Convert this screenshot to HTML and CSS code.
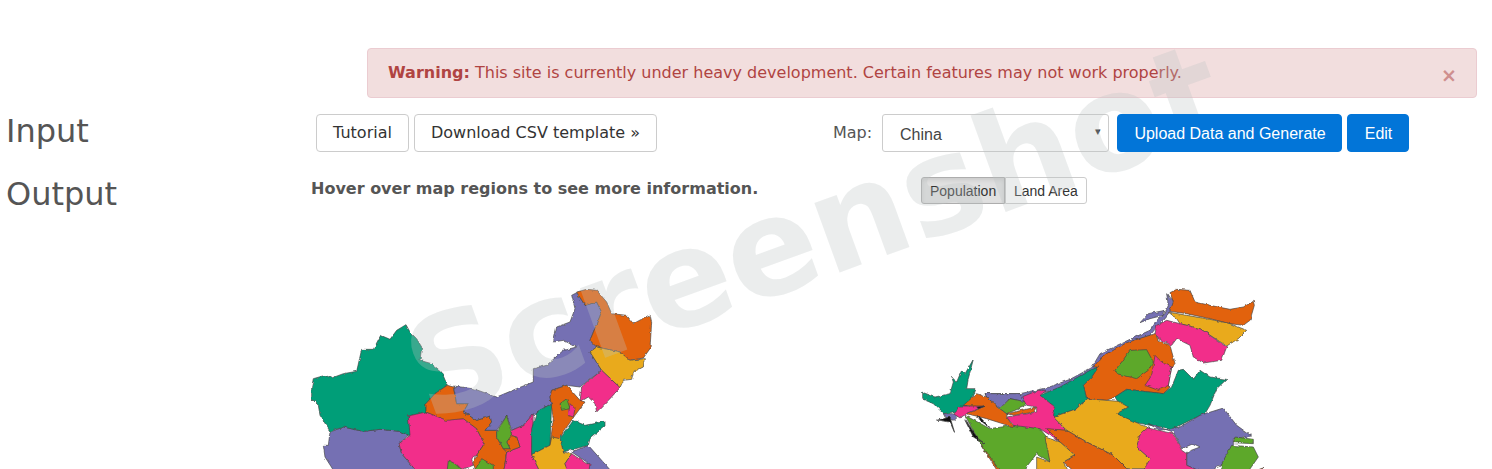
FILE: index.html
```html
<!DOCTYPE html>
<html lang="en">
<head>
<meta charset="utf-8">
<title>Map Generator</title>
<link rel="stylesheet" href="styles.css">
</head>
<body>
<div class="page">
  <div class="alert"><p class="alert-text"><strong>Warning:</strong> This site is currently under heavy development. Certain features may not work properly.</p><span class="alert-close">×</span></div>
  <section class="row row-input">
    <h2 class="heading">Input</h2>
    <div class="actions">
      <button class="btn btn-light btn-tutorial">Tutorial</button>
      <button class="btn btn-light btn-download">Download CSV template »</button>
    </div>
    <label class="map-label">Map:</label>
    <div class="select"><span>China</span><i class="caret">▾</i></div>
    <button class="btn btn-primary btn-upload">Upload Data and Generate</button>
    <button class="btn btn-primary btn-edit">Edit</button>
  </section>
  <section class="row row-output">
    <h2 class="heading">Output</h2>
    <p class="hint">Hover over map regions to see more information.</p>
    <div class="toggle"><span class="toggle-item active">Population</span><span class="toggle-item">Land Area</span></div>
  </section>
  <section class="maps">
    <svg class="map map-left" viewBox="0 0 1080 597" width="360" height="199">
      <defs>
        <filter id="rough" x="-2%" y="-2%" width="104%" height="104%">
          <feTurbulence type="fractalNoise" baseFrequency="0.07" numOctaves="2" seed="4" result="n"/>
          <feDisplacementMap in="SourceGraphic" in2="n" scale="9" xChannelSelector="R" yChannelSelector="G"/>
        </filter>
      </defs>
      <g class="regions" filter="url(#rough)">
        <path class="purple" d="M90 480 130 465 190 478 240 472 300 478 325 490 297 515 305 545 360 610 110 610 75 555 70 520 85 520Z"/>
        <path class="green" d="M35 345 40 320 75 310 95 318 130 305 170 298 185 232 220 232 242 190 270 202 290 175 318 158 330 180 350 200 365 225 360 265 395 275 425 300 442 340 405 365 378 395 378 420 325 432 335 490 325 490 300 478 240 472 190 478 130 465 90 478 60 430 55 400 35 380Z"/>
        <path class="pink" d="M325 432 378 420 440 440 490 440 530 470 553 515 530 550 515 560 520 580 440 610 360 610 305 545 297 515 330 490Z"/>
        <path class="orange" d="M378 395 405 365 442 340 460 345 470 395 505 395 490 420 530 445 570 432 575 450 555 475 590 475 590 495 610 530 620 540 610 610 530 610 520 575 530 550 553 515 530 470 490 440 440 445 378 420Z"/>
        <path class="purple" d="M460 342 520 350 590 375 650 350 700 330 700 290 740 280 790 235 830 225 790 205 760 210 770 165 810 150 825 110 815 70 830 62 855 100 890 90 905 120 870 205 890 225 870 240 905 295 840 345 800 340 755 355 750 375 755 395 710 420 700 430 670 460 635 475 620 432 590 475 555 475 575 450 570 432 530 445 490 420 505 395 470 395Z"/>
        <path class="orange" d="M830 60 860 52 890 55 920 90 935 125 980 130 1000 155 1050 128 1055 150 1050 230 1030 258 990 265 960 240 890 225 870 205 905 120 890 90 855 100Z"/>
        <path class="yellow" d="M870 240 890 225 960 240 990 265 1033 260 1030 285 1000 300 995 322 970 325 960 347 905 295Z"/>
        <path class="pink" d="M905 295 960 347 930 380 890 420 885 395 865 375 840 390 845 345Z"/>
        <path class="pink" d="M635 475 670 460 700 425 695 548 725 610 610 610 620 540 660 525 650 495 630 490Z"/>
        <path class="orange" d="M630 490 650 495 660 525 620 540 610 530 630 530 620 510Z"/>
        <path class="orange" d="M755 355 800 340 840 385 855 390 825 430 790 480 780 500 750 520 760 440 750 375Z"/>
        <path class="lime" d="M780 395 800 380 810 410 785 415Z"/>
        <path class="pink" d="M810 395 825 410 820 435 805 430Z"/>
        <path class="green" d="M755 395 750 520 695 548 695 470 710 420Z"/>
        <path class="lime" d="M590 480 620 432 630 465 635 490 620 510 630 530 610 530 590 495Z"/>
        <path class="purple" d="M815 540 865 520 945 610 870 610 860 570Z"/>
        <path class="green" d="M780 500 820 445 855 460 915 448 915 462 870 500 865 520 790 540Z"/>
        <path class="yellow" d="M695 548 750 520 755 495 780 500 790 540 815 545 795 575 805 610 725 610Z"/>
        <path class="pink" d="M815 545 860 575 870 575 865 610 805 610 795 575Z"/>
        <path class="lime" d="M445 565 465 575 500 610 440 610Z"/>
        <path class="lime" d="M515 610 545 560 580 580 580 610Z"/>
      </g>
    </svg>
    <svg class="map map-right" viewBox="0 0 1080 567" width="360" height="189">
      <g class="regions" filter="url(#rough)">
        <path class="purple" d="M770 35 780 50 825 50 785 75 775 95 745 130 720 160 650 185 600 215 575 245 555 265 500 300 430 325 340 345 290 355 230 345 225 335 290 335 330 335 410 318 480 292 545 257 570 215 600 200 660 172 720 145 745 110 765 95 775 70Z"/>
        <path class="purple" d="M690 122 715 95 765 85 760 100 720 110Z"/>
        <path class="purple" d="M225 335 330 335 350 360 300 350 270 378 260 372 230 345Z"/>
        <path class="orange" d="M780 32 800 22 840 25 855 60 900 70 960 82 1000 75 1030 58 1033 70 1020 115 1000 130 960 125 900 110 830 95 780 88 790 60Z"/>
        <path class="yellow" d="M775 90 830 100 900 112 960 125 1010 145 985 170 950 192 870 140 810 125 800 110Z"/>
        <path class="pink" d="M735 155 740 130 770 115 810 125 870 140 950 195 935 235 880 243 850 225 840 190 800 170 785 190 745 170Z"/>
        <path class="orange" d="M735 155 745 175 780 190 795 245 785 255 775 310 780 315 760 335 650 322 615 345 590 355 530 350 520 310 545 285 565 255 550 255 575 225 650 182Z"/>
        <path class="lime" d="M660 205 710 203 730 240 715 265 680 290 620 275 615 265 635 240Z"/>
        <path class="pink" d="M735 220 755 240 785 255 775 310 745 325 705 310 725 280 730 250Z"/>
        <path class="green" d="M390 340 450 315 540 265 565 255 545 285 520 310 530 350 500 380 430 405 435 375Z"/>
        <path class="green" d="M615 345 650 322 760 335 785 315 805 265 820 262 850 292 870 265 900 285 950 292 920 320 900 370 885 395 850 410 790 440 720 430 670 420 620 395 655 375 630 370Z"/>
        <path class="green" d="M35 330 75 345 120 335 130 300 125 285 140 300 155 265 165 275 190 232 175 290 170 320 195 320 185 350 160 385 100 395 70 365 35 350Z"/>
        <path class="purple" d="M100 395 150 395 130 415 105 405Z"/>
        <path class="orange" d="M165 410 262 567 285 567 205 475Z"/>
        <path class="lime" d="M165 400 240 440 310 430 390 440 410 465 420 540 380 515 340 567 270 567 205 475Z"/>
        <path class="orange" d="M160 370 200 335 230 345 260 372 270 380 290 395 290 405 310 435 230 410 170 395 220 375Z"/>
        <path class="pink" d="M130 395 150 372 225 372 170 395 150 408Z"/>
        <path class="lime" d="M270 380 300 350 350 360 340 375 290 395Z"/>
        <path class="orange" d="M290 395 380 375 370 390 310 400Z"/>
        <path class="pink" d="M335 345 385 325 410 325 390 340 435 375 430 405 470 445 440 445 450 480 390 440 310 430 290 405 380 390 380 375 350 370Z"/>
        <path class="yellow" d="M430 405 500 380 530 350 625 358 655 375 620 395 720 440 735 465 695 455 680 495 720 530 720 560 650 560 610 520 530 480 470 445Z"/>
        <path class="orange" d="M410 440 470 445 530 480 610 520 650 560 700 575 500 575 460 540 495 520 450 480Z"/>
        <path class="yellow" d="M405 465 450 480 495 520 460 540 480 575 380 575 380 525 420 540Z"/>
        <path class="purple" d="M715 425 750 445 810 435 870 400 940 378 980 430 1025 462 970 470 970 490 935 550 880 575 830 550 830 510 870 495 850 485 815 500 790 450Z"/>
        <path class="pink" d="M710 437 790 455 815 505 830 515 830 550 890 575 695 575 720 530 680 495 690 455Z"/>
        <path class="lime" d="M975 465 1030 472 1030 485 970 482Z"/>
        <path class="lime" d="M965 490 1030 495 1045 525 1010 575 935 575 935 545Z"/>
        <path class="ink" d="M80 415 120 405 135 455 120 420 90 415ZM165 415 205 470 225 485 190 465ZM200 375 225 372 205 380ZM205 400 240 437 210 415Z"/>
        <path class="orange" d="M1048 562 1058 558 1056 567Z"/>
      </g>
    </svg>
  </section>
  <div class="watermark">Screenshot</div>
</div>
</body>
</html>
```

FILE: styles.css
```css
* { box-sizing: border-box; }
html, body { margin: 0; height: 100%; overflow: hidden; background: #fff; }
body { font-family: "DejaVu Sans", sans-serif; color: #555; }
.page { position: relative; width: 1492px; height: 469px; padding-top: 48px; overflow: hidden; }

.alert {
  display: flex; justify-content: space-between;
  width: 1110px; height: 50px; margin-left: 367px; padding: 13px 21px 0 20px;
  background: #f2dede; border: 1px solid #ebccd1; border-radius: 4px; color: #b04442;
  font-size: 16px; line-height: 22px;
}
.alert-text { margin: 0; }
.alert-close { font-weight: bold; font-size: 19px; line-height: 27px; color: #cf8f8e; margin-right: -2px; }

.row { display: flex; align-items: flex-start; }
.row-input { height: 78px; padding-top: 16px; }
.row-output { height: 92px; }
.heading { margin: 0; padding-left: 6px; font-weight: 400; font-size: 32px; line-height: 38px; color: #555; }
.row-input .heading { width: 316px; margin-top: -2px; }
.row-output .heading { width: 311px; margin-top: -1px; }

.btn { height: 38px; padding: 0; border-radius: 4px; font-size: 16px; white-space: nowrap; }
.btn-light { background: #fff; border: 1px solid #ccc; color: #333; font-family: "DejaVu Sans", sans-serif; padding-bottom: 2px; }
.btn-primary { position: relative; z-index: 1; background: #0275d8; border: 1px solid #0275d8; color: #fff; font-family: "Liberation Sans", sans-serif; padding: 1px 0 0 1px; }
.actions { display: flex; gap: 5px; width: 517px; }
.btn-tutorial { width: 93px; }
.btn-download { width: 243px; }
.map-label { width: 49px; font-size: 16px; line-height: 38px; }
.select {
  display: flex; justify-content: space-between; align-items: center;
  width: 227px; height: 38px; padding: 3px 7px 0 17px; border: 1px solid #ccc; border-radius: 3px;
  background: #fff; color: #444; font-family: "Liberation Sans", sans-serif; font-size: 16px;
}
.caret { font-style: normal; font-size: 11px; margin-top: -6px; color: #333; }
.btn-upload { width: 225px; margin-left: 8px; }
.btn-edit { width: 62px; margin-left: 5px; }

.hint { margin: 2px 0 0; width: 610px; font-size: 16px; font-weight: bold; line-height: 22px; color: #555; }
.toggle { display: flex; height: 27px; margin-top: 1px; font-family: "Liberation Sans", sans-serif; font-size: 14px; color: #333; }
.toggle-item { padding: 0 8px; line-height: 26px; border: 1px solid #ccc; background: #fff; }
.toggle-item:first-child { width: 84px; border-radius: 3px 0 0 3px; border-right: 0; }
.toggle-item:last-child { width: 82px; border-radius: 0 3px 3px 0; }
.toggle-item.active { background: #e0e0e0; border-color: #adadad; border-right: 1px solid #adadad; box-shadow: inset 0 2px 4px rgba(0,0,0,.1); }

.maps { display: flex; align-items: flex-start; padding-left: 300px; }
.map { display: block; flex: none; }
.map-left { margin-top: 4px; margin-right: 250px; }
.map-right { margin-top: 14px; }
.regions { stroke: #444; stroke-width: 2; stroke-linejoin: round; }
.green { fill: #009e78; }
.purple { fill: #7570b3; }
.pink { fill: #f22d8a; }
.orange { fill: #e2620e; }
.yellow { fill: #e9aa1e; }
.lime { fill: #5da82b; }
.ink { fill: #111; }

.watermark {
  position: absolute; left: 412px; top: 311px;
  font-family: "DejaVu Sans", sans-serif; font-weight: bold; font-size: 135px; line-height: 1;
  color: rgba(190,196,196,.3); white-space: nowrap; transform: rotate(-20deg); transform-origin: 0 50%;
  pointer-events: none;
}
```
